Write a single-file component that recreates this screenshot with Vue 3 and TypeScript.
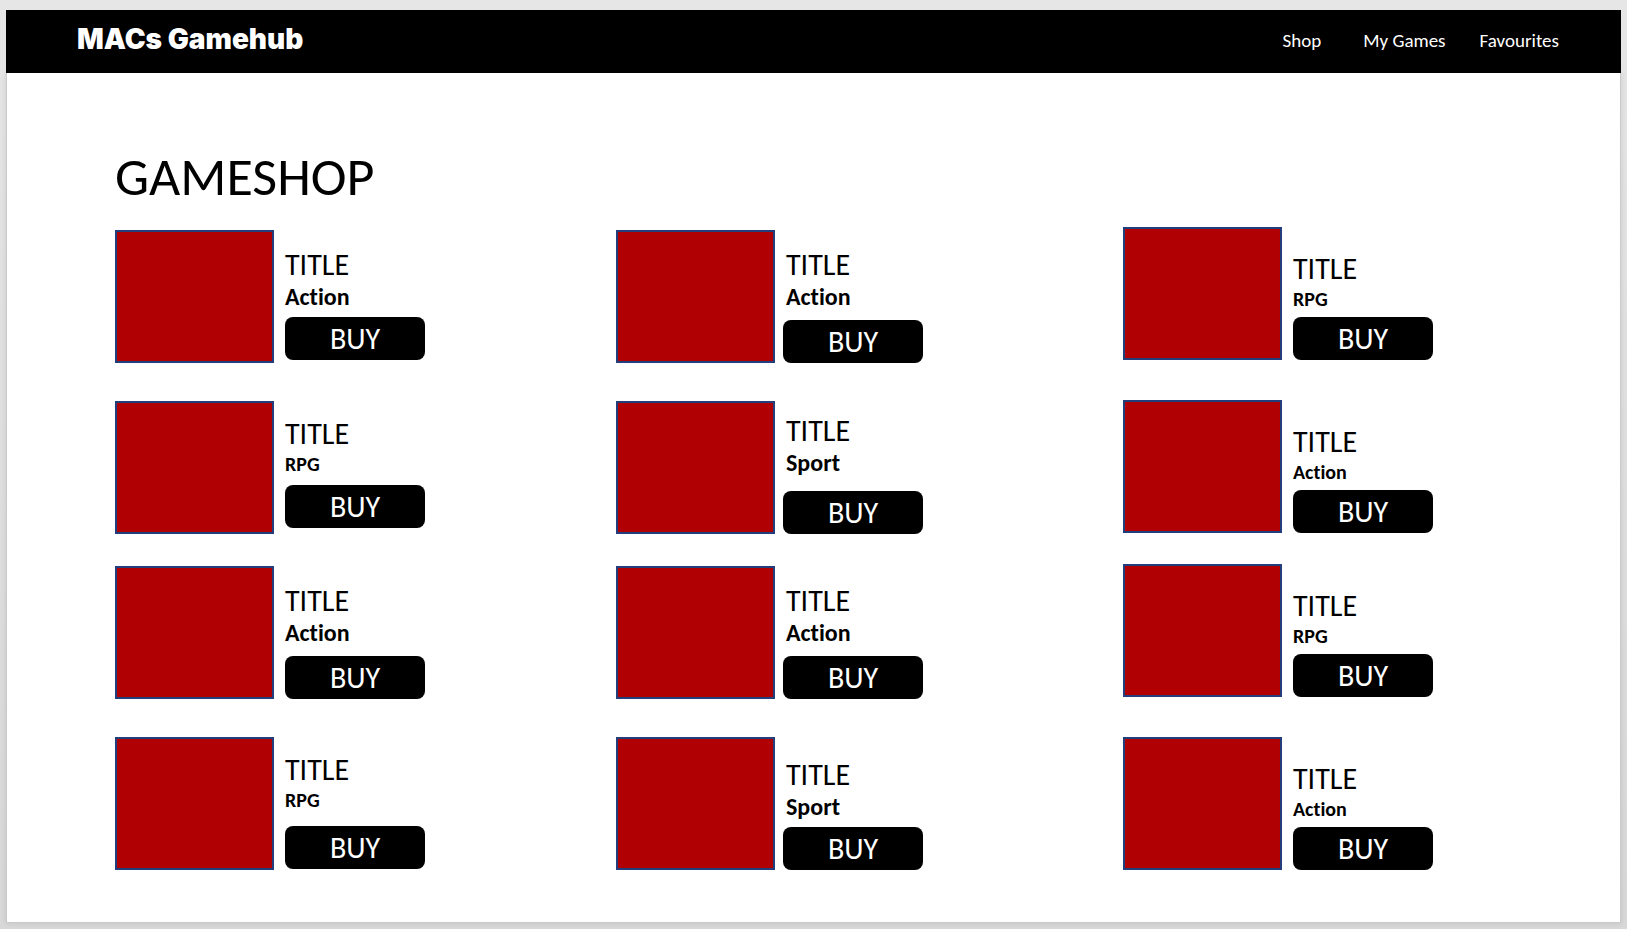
<script setup lang="ts">
type Drop = 'high' | 'upper' | 'mid' | 'low' | 'lowest'
type Gap = 'tight' | 'normal' | 'wide'

interface Game {
  id: number
  title: string
  genre: string
  size: 'large' | 'small'
  drop: Drop
  gap: Gap
}

interface Column {
  name: string
  games: Game[]
}

const links: string[] = ['Shop', 'My Games', 'Favourites']

const game = (id: number, genre: string, size: Game['size'], drop: Drop, gap: Gap): Game => ({
  id,
  title: 'TITLE',
  genre,
  size,
  drop,
  gap,
})

const columns: Column[] = [
  {
    name: 'first',
    games: [
      game(1, 'Action', 'large', 'mid', 'tight'),
      game(2, 'RPG', 'small', 'upper', 'normal'),
      game(3, 'Action', 'large', 'mid', 'normal'),
      game(4, 'RPG', 'small', 'upper', 'wide'),
    ],
  },
  {
    name: 'second',
    games: [
      game(5, 'Action', 'large', 'mid', 'normal'),
      game(6, 'Sport', 'large', 'high', 'wide'),
      game(7, 'Action', 'large', 'mid', 'normal'),
      game(8, 'Sport', 'large', 'low', 'tight'),
    ],
  },
  {
    name: 'third',
    games: [
      game(9, 'RPG', 'small', 'lowest', 'tight'),
      game(10, 'Action', 'small', 'lowest', 'tight'),
      game(11, 'RPG', 'small', 'lowest', 'tight'),
      game(12, 'Action', 'small', 'lowest', 'tight'),
    ],
  },
]
</script>

<template>
  <div class="page">
    <header class="bar">
      <div class="brand">MACs Gamehub</div>
      <nav>
        <ul class="links">
          <li v-for="link in links" :key="link"><a href="#">{{ link }}</a></li>
        </ul>
      </nav>
    </header>
    <main class="shop">
      <h1>GAMESHOP</h1>
      <div class="columns">
        <section v-for="column in columns" :key="column.name" class="column" :class="column.name">
          <article v-for="item in column.games" :key="item.id" class="game">
            <div class="cover"></div>
            <div class="details" :class="[item.drop, item.gap]">
              <h2>{{ item.title }}</h2>
              <p class="genre" :class="item.size">{{ item.genre }}</p>
              <button type="button">BUY</button>
            </div>
          </article>
        </section>
      </div>
    </main>
  </div>
</template>

<style>
body {
  margin: 0;
  background: #dcdcdc;
}
</style>

<style scoped>
.page {
  box-sizing: border-box;
  display: flex;
  flex-direction: column;
  min-height: 100vh;
  padding: 10px 6px 6px;
  background: linear-gradient(#e6e6e6, #d8d8d8);
  color: #000;
  font-family: Calibri, Carlito, Lato, sans-serif;
  font-variant-ligatures: none;
}

.bar {
  display: flex;
  justify-content: space-between;
  height: 63px;
  padding: 0 62px 0 71px;
  background: #000;
  color: #fff;
}

.brand {
  font-family: Futura, Inter, sans-serif;
  font-size: 28px;
  font-weight: 900;
  line-height: 58px;
}

.links {
  display: flex;
  gap: 34px;
  margin: 0;
  padding: 0;
  list-style: none;
  font-size: 19px;
  line-height: 62px;
}

.links li:first-child {
  margin-right: 8px;
}

.links a {
  color: inherit;
  text-decoration: none;
}

.shop {
  flex: 1;
  padding: 75px 0 40px 108px;
  border: 1px solid #cacaca;
  border-top: 0;
  background: #fff;
  box-shadow: 0 0 6px rgba(0, 0, 0, 0.1);
}

h1 {
  margin: 0;
  font-size: 54px;
  font-weight: 400;
  line-height: 58px;
}

.columns {
  display: grid;
  grid-template-columns: 501fr 507fr 497fr;
  margin-top: 21px;
}

.column {
  display: grid;
  grid-template-rows: 173px 164px 173px auto;
  align-content: start;
}

.first,
.second {
  grid-template-rows: 171px 165px 171px auto;
  padding-top: 3px;
}

.game {
  display: flex;
  align-items: flex-start;
  gap: 11px;
}

.second .game {
  gap: 8px;
}

.cover {
  box-sizing: border-box;
  width: 159px;
  height: 133px;
  border: 2px solid #233e7c;
  background: #b00004;
}

.details {
  width: 140px;
}

.high {
  padding-top: 14px;
}

.upper {
  padding-top: 17px;
}

.mid {
  padding-top: 19px;
}

.low {
  padding-top: 22px;
}

.lowest {
  padding-top: 26px;
}

h2,
.genre {
  margin: 0;
}

.second h2,
.second .genre {
  padding-left: 3px;
}

h2 {
  font-size: 30px;
  font-weight: 400;
  line-height: 32px;
}

.genre {
  font-weight: 700;
}

.large {
  font-size: 24px;
  line-height: 32px;
}

.small {
  font-size: 20px;
  line-height: 28px;
}

button {
  display: block;
  width: 100%;
  height: 43px;
  padding: 0;
  border: 0;
  border-radius: 8px;
  background: #000;
  color: #fff;
  font: inherit;
  font-size: 30px;
  line-height: 43px;
}

.tight button {
  margin-top: 4px;
}

.normal button {
  margin-top: 7px;
}

.wide button {
  margin-top: 12px;
}
</style>
